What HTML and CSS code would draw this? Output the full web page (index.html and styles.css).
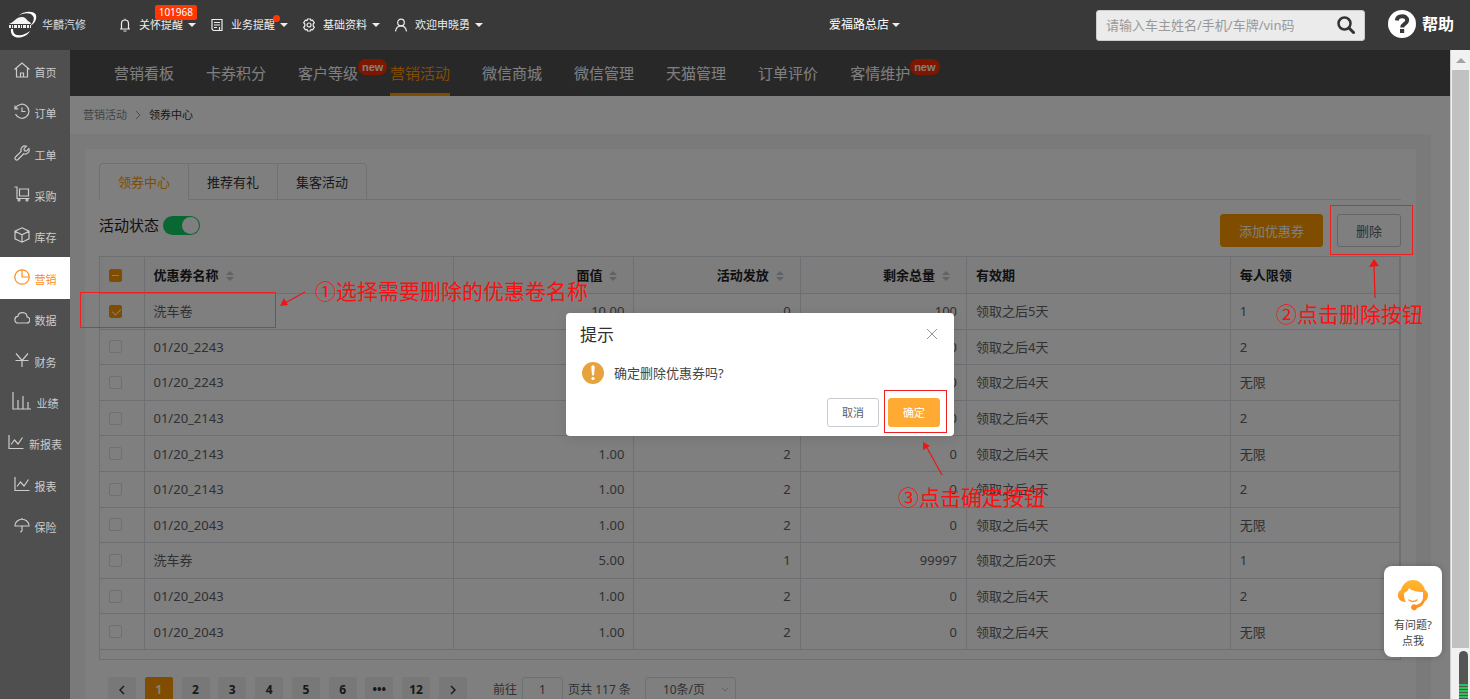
FILE: index.html
```html
<!DOCTYPE html>
<html lang="zh-CN">
<head>
<meta charset="utf-8">
<title>领券中心</title>
<link rel="stylesheet" href="styles.css">
</head>
<body>
<header class="topbar">
  <a class="brand" href="#">
    <svg class="brand-logo" viewBox="0 0 30 28" fill="none" aria-hidden="true">
      <path d="M10 5C15 0 26-1 28 4c1 5-2 9-6 11 3-3 5-7 3-10C22 1 15 2 10 5Z" fill="#fff"/>
      <path d="M1 13c2-1 4-2 6-4 2-2 4-3 7-3s4 2 6 4c2 1 3 2 3 3Z" fill="#f4f4f4"/>
      <path d="M1 15.500h22" stroke="#eee" stroke-width="3" stroke-dasharray="2 1 1 1 3 1"/>
      <path d="M3 18c-1 7 5 10 11 8 4-1 7-4 8-6-4 3-9 5-12 4-3 0-5-2-5-6Z" fill="#fff"/>
    </svg>
    <span>华麟汽修</span>
  </a>
  <nav class="menus">
    <button class="menu">
      <svg class="menu-icon" viewBox="0 0 14 14"><path d="M3.500 11V5.500a3.500 3.500 0 0 1 7 0V11M2 11h10M5.500 13h3M7 .8V2"/></svg>
      <span>关怀提醒</span><i class="caret"></i><b class="count">101968</b>
    </button>
    <button class="menu">
      <svg class="menu-icon" viewBox="0 0 14 14"><path d="M2 1.500h10v11H4a2 2 0 0 1-2-2ZM4 4.500h6M4 7h6M4 9.500h3M9.500 9v3.500"/></svg>
      <span>业务提醒</span><i class="caret"></i><b class="dot"></b>
    </button>
    <button class="menu">
      <svg class="menu-icon" viewBox="0 0 14 14"><path d="m5.500 1h3l.5 1.600 1.600-.4 1.700 2.500L11.200 6v2l1.100 1.300-1.700 2.500-1.600-.4-.5 1.600h-3L5 11.400l-1.600.4-1.700-2.500L2.800 8V6L1.700 4.700l1.700-2.500 1.600.4Z"/><circle cx="7" cy="7" r="2"/></svg>
      <span>基础资料</span><i class="caret"></i>
    </button>
    <button class="menu">
      <svg class="menu-icon" viewBox="0 0 14 14"><circle cx="7" cy="4.500" r="3.300"/><path d="M1.500 13.300C2 10 4 7.800 7 7.800s5 2.200 5.500 5.500"/></svg>
      <span>欢迎申晓勇</span><i class="caret"></i>
    </button>
  </nav>
  <button class="menu store"><span>爱福路总店</span><i class="caret"></i></button>
  <form class="search">
    <input type="text" aria-label="搜索" placeholder="请输入车主姓名/手机/车牌/vin码">
    <button type="button" aria-label="搜索">
      <svg width="18" height="18" viewBox="0 0 18 18" fill="none" stroke="#333"><circle cx="7.500" cy="7.500" r="6" stroke-width="2.500"/><path d="m12 12 4.500 4.500" stroke-width="3" stroke-linecap="round"/></svg>
    </button>
  </form>
  <a class="help" href="#">
    <svg width="28" height="28" viewBox="0 0 28 28"><circle cx="14" cy="14" r="14" fill="#fff"/><path d="M8.800 10.500C9.100 7.300 11.300 6.200 14 6.200c3 0 5.200 1.500 5.200 4.100 0 3.700-5 3.500-5 7.200" fill="none" stroke="#393939" stroke-width="4"/><rect x="12" y="19" width="4.200" height="4" fill="#393939"/></svg>
    <span>帮助</span>
  </a>
</header>

<div class="shell">
  <nav class="sidebar">
    <a href="#"><svg viewBox="0 0 16 16"><path d="M.5 7.500 8 1l7.500 6.500M2.500 6v9h11V6M6.500 15v-4h3v4"/></svg><span>首页</span></a>
    <a href="#"><svg viewBox="0 0 16 16"><path d="M1.500 5.500A7 7 0 1 1 1.500 11M1 2.500v3.300h3.300M8 4.500v4h3.500"/></svg><span>订单</span></a>
    <a href="#"><svg viewBox="0 0 16 16"><path d="M12.500 1.200 10 3.700l.4 2 2 .4 2.500-2.500c1.200 3.400-2 6.400-5.200 5.200L4 14.500c-1.700 1.500-4-.6-2.500-2.500L7.200 6.300C6 3 9 0 12.500 1.200Z"/></svg><span>工单</span></a>
    <a href="#"><svg viewBox="0 0 16 16"><path d="M.5 1H3v11.500h12.500M5.500 3h9v7h-9Z"/><circle cx="5" cy="14" r="1"/><circle cx="13" cy="14" r="1"/></svg><span>采购</span></a>
    <a href="#"><svg viewBox="0 0 16 16"><path d="m8 .8 7 3.400v7.600l-7 3.400-7-3.400V4.200ZM1 4.200l7 3.600 7-3.600M8 7.800v7.400"/></svg><span>库存</span></a>
    <a href="#" class="active"><svg viewBox="0 0 16 16"><circle cx="8" cy="8" r="7.200"/><path d="M8 .8V8h7.200"/></svg><span>营销</span></a>
    <a href="#"><svg viewBox="0 0 16 16"><path d="M4 13h8.500a3 3 0 0 0 .6-6C13 1.500 5 1 3.800 6.300 0 6.500-.2 12.800 4 13Z"/></svg><span>数据</span></a>
    <a href="#"><svg viewBox="0 0 16 16"><path d="m2 1.500 6 7 6-7M1.500 8.500h13M8 8.500V15"/></svg><span>财务</span></a>
    <a href="#"><svg class="wide" viewBox="0 0 20 18"><path d="M1 0v17h18M6 17V8M11 17V4M16 17v-7"/></svg><span>业绩</span></a>
    <a href="#"><svg viewBox="0 0 16 16"><path d="M1 1v13.500h14.500M3 10.500 6.500 6l3.500 4 4.500-6.500"/></svg><span>新报表</span></a>
    <a href="#"><svg viewBox="0 0 16 16"><path d="M1 1v13.500h14.500M3 10.500 6.500 6l3.500 4 4.500-6.500"/></svg><span>报表</span></a>
    <a href="#"><svg viewBox="0 0 16 16"><path d="M1 9C1 0 15 0 15 9ZM8 1v1.500M8 9v4.500q0 1.500-2 1.500"/></svg><span>保险</span></a>
  </nav>

  <div class="frame">
    <nav class="subnav">
      <a href="#">营销看板</a>
      <a href="#">卡券积分</a>
      <a href="#">客户等级<sup>new</sup></a>
      <a href="#" class="active">营销活动</a>
      <a href="#">微信商城</a>
      <a href="#">微信管理</a>
      <a href="#">天猫管理</a>
      <a href="#">订单评价</a>
      <a href="#">客情维护<sup>new</sup></a>
    </nav>
    <div class="crumbs">
      <a href="#">营销活动</a>
      <svg width="6" height="10" viewBox="0 0 6 10"><path d="m1 1 4 4-4 4" fill="none" stroke="#999"/></svg>
      <span>领券中心</span>
    </div>
    <main class="backdrop">
      <section class="panel">
        <div class="tabs">
          <button class="active">领券中心</button><button>推荐有礼</button><button>集客活动</button>
        </div>
        <div class="toolbar">
          <label class="status">活动状态<input class="switch" type="checkbox" role="switch" checked></label>
          <div class="actions">
            <button class="btn primary">添加优惠券</button>
            <button class="btn">删除</button>
          </div>
        </div>
        <div class="table-box">
          <table class="coupons">
            <colgroup><col class="c-check"><col class="c-name"><col class="c-value"><col class="c-count"><col class="c-count"><col class="c-valid"><col class="c-limit"></colgroup>
            <thead>
              <tr>
                <th><input class="tick mixed" type="checkbox" aria-label="全选"></th>
                <th>优惠券名称<i class="sort"></i></th>
                <th class="num">面值<i class="sort"></i></th>
                <th class="num">活动发放<i class="sort"></i></th>
                <th class="num">剩余总量<i class="sort"></i></th>
                <th>有效期</th>
                <th>每人限领</th>
              </tr>
            </thead>
            <tbody>
              <tr><td><input class="tick" type="checkbox" aria-label="选择" checked></td><td>洗车卷</td><td class="num">10.00</td><td class="num">0</td><td class="num">100</td><td>领取之后5天</td><td>1</td></tr>
              <tr><td><input class="tick" type="checkbox" aria-label="选择"></td><td>01/20_2243</td><td class="num">1.00</td><td class="num">2</td><td class="num">0</td><td>领取之后4天</td><td>2</td></tr>
              <tr><td><input class="tick" type="checkbox" aria-label="选择"></td><td>01/20_2243</td><td class="num">1.00</td><td class="num">2</td><td class="num">0</td><td>领取之后4天</td><td>无限</td></tr>
              <tr><td><input class="tick" type="checkbox" aria-label="选择"></td><td>01/20_2143</td><td class="num">1.00</td><td class="num">2</td><td class="num">0</td><td>领取之后4天</td><td>2</td></tr>
              <tr><td><input class="tick" type="checkbox" aria-label="选择"></td><td>01/20_2143</td><td class="num">1.00</td><td class="num">2</td><td class="num">0</td><td>领取之后4天</td><td>无限</td></tr>
              <tr><td><input class="tick" type="checkbox" aria-label="选择"></td><td>01/20_2143</td><td class="num">1.00</td><td class="num">2</td><td class="num">0</td><td>领取之后4天</td><td>2</td></tr>
              <tr><td><input class="tick" type="checkbox" aria-label="选择"></td><td>01/20_2043</td><td class="num">1.00</td><td class="num">2</td><td class="num">0</td><td>领取之后4天</td><td>无限</td></tr>
              <tr><td><input class="tick" type="checkbox" aria-label="选择"></td><td>洗车券</td><td class="num">5.00</td><td class="num">1</td><td class="num">99997</td><td>领取之后20天</td><td>1</td></tr>
              <tr><td><input class="tick" type="checkbox" aria-label="选择"></td><td>01/20_2043</td><td class="num">1.00</td><td class="num">2</td><td class="num">0</td><td>领取之后4天</td><td>2</td></tr>
              <tr><td><input class="tick" type="checkbox" aria-label="选择"></td><td>01/20_2043</td><td class="num">1.00</td><td class="num">2</td><td class="num">0</td><td>领取之后4天</td><td>无限</td></tr>
            </tbody>
          </table>
        </div>
        <div class="pagination">
          <div class="pages">
            <button aria-label="上一页"><svg width="8" height="10" viewBox="0 0 8 10"><path d="M6 1 2 5l4 4"/></svg></button>
            <button class="active">1</button><button>2</button><button>3</button><button>4</button><button>5</button><button>6</button><button>•••</button><button>12</button>
            <button aria-label="下一页"><svg width="8" height="10" viewBox="0 0 8 10"><path d="m2 1 4 4-4 4"/></svg></button>
          </div>
          <label class="jump">前往<input type="text" value="1">页</label><span>共 117 条</span>
          <div class="size">
            <select aria-label="每页条数"><option>10条/页</option></select>
            <svg width="8" height="6" viewBox="0 0 8 6"><path d="m1 1 3 3 3-3" fill="none" stroke="#c0c4cc"/></svg>
          </div>
        </div>
      </section>
    </main>

    <div class="mask">
      <div class="dialog" role="dialog" aria-labelledby="dialog-title">
        <div class="dialog-head">
          <h2 id="dialog-title">提示</h2>
          <button class="close" aria-label="关闭"><svg width="10" height="10" viewBox="0 0 10 10"><path d="m0 0 10 10M10 0 0 10" stroke="#909399"/></svg></button>
        </div>
        <div class="dialog-body">
          <svg width="22" height="22" viewBox="0 0 22 22"><circle cx="11" cy="11" r="11" fill="#e6a23c"/><path d="M9.300 5a1.700 1.700 0 0 1 3.400 0l-.6 7.500a1.100 1.100 0 0 1-2.200 0Z" fill="#fff"/><circle cx="11" cy="16.500" r="1.600" fill="#fff"/></svg>
          <p>确定删除优惠券吗?</p>
        </div>
        <div class="dialog-foot">
          <button class="btn small">取消</button>
          <button class="btn small primary">确定</button>
        </div>
      </div>
    </div>

    <a class="assistant" href="#">
      <svg width="32" height="32" viewBox="0 0 32 32">
        <defs><linearGradient id="hair" x1="0" y1="0" x2="0" y2="1"><stop offset="0" stop-color="#ffb92e"/><stop offset="1" stop-color="#ff8a1e"/></linearGradient></defs>
        <path d="M4 11C6 4 11 1 16 1s10 3 12 10c2 1 3 3 3 5 0 3-1 5-3 6-2 4-4 6-8 7a3 3 0 1 1-1-3c4-1 6-3 7-7V13c-5 0-11-1-14-4-1 3-3 4-5 5 0 4 0 6 2 9-3 0-6-1-7-3-2-3-1-8 2-9Z" fill="url(#hair)"/>
        <path d="M12 21q4 3 8 0" fill="none" stroke="#ff9a25" stroke-width="1.500" stroke-linecap="round"/>
      </svg>
      <span>有问题?</span><span>点我</span>
    </a>
  </div>

  <div class="scrollbar" aria-hidden="true">
    <svg class="arrow" width="10" height="5" viewBox="0 0 10 5"><path d="m0 5 5-5 5 5Z" fill="#a3a3a3"/></svg>
    <div class="thumb"></div>
    <div class="meter"></div>
  </div>
</div>

<div class="notes">
  <i class="ring ring-row"></i><i class="ring ring-delete"></i><i class="ring ring-confirm"></i>
  <span class="note note-row">①选择需要删除的优惠卷名称</span>
  <span class="note note-delete">②点击删除按钮</span>
  <span class="note note-confirm">③点击确定按钮</span>
  <svg class="pointer pointer-row" width="26" height="17" viewBox="0 0 26 17"><path d="M25 1 5 12" stroke="#f01414" stroke-width="1.200"/><path d="m0 15 4-8 4 7Z" fill="#f01414"/></svg>
  <svg class="pointer pointer-delete" width="12" height="40" viewBox="0 0 12 40"><path d="M5 5l1 34" stroke="#f01414" stroke-width="1.200"/><path d="m0 8 5-8 5 7Z" fill="#f01414"/></svg>
  <svg class="pointer pointer-confirm" width="22" height="36" viewBox="0 0 22 36"><path d="m4 5 16 29" stroke="#f01414" stroke-width="1.200"/><path d="M1 1 8 5l-7 4Z" fill="#f01414"/></svg>
</div>
</body>
</html>
```

FILE: styles.css
```css
* { box-sizing: border-box; }

body {
  margin: 0;
  height: 100vh;
  overflow: hidden;
  display: flex;
  flex-direction: column;
  font: 13px/20px "Noto Sans", "Noto Sans CJK SC", sans-serif;
  color: #606266;
}

a { color: inherit; text-decoration: none; }
button, input, select { font: inherit; color: inherit; margin: 0; }
button { border: 0; background: none; padding: 0; cursor: pointer; }

/* top bar */
.topbar {
  flex: none;
  height: 50px;
  display: flex;
  align-items: center;
  padding: 0 16px 0 8px;
  background: #393939;
  color: #fff;
}
.brand { display: flex; align-items: center; gap: 4px; width: 110px; font-size: 11px; color: #ddd; }
.brand-logo { width: 30px; height: 28px; }
.menus { display: flex; gap: 14px; }
.menu { position: relative; display: flex; align-items: center; gap: 7px; font-size: 11px; line-height: 16px; color: #eee; }
.menu-icon { width: 14px; height: 14px; fill: none; stroke: #eee; stroke-width: 1.2; }
.caret { width: 8px; margin-left: -2px; border: 4px solid transparent; border-top-color: #eee; border-bottom: 0; }
.count {
  position: absolute;
  top: -12px;
  right: -1px;
  padding: 0 4px;
  border-radius: 2px;
  background: #ff3700;
  color: #fff;
  font-weight: 400;
  font-size: 10px;
  line-height: 15px;
}
.dot { position: absolute; top: -2px; right: 8px; width: 7px; height: 7px; border-radius: 50%; background: #ff3700; }
.store { margin-left: auto; margin-right: 196px; font-size: 12px; gap: 5px; color: #fff; }
.search { display: flex; width: 269px; height: 31px; border: 1px solid #ccc; border-radius: 3px; background: #ebebeb; }
.search input { flex: 1; min-width: 0; border: 0; padding: 0 9px; background: none; outline: 0; }
.search input::placeholder { color: #999; opacity: 1; }
.search button { display: grid; place-items: center; width: 36px; }
.help { display: flex; align-items: center; gap: 6px; margin-left: 23px; margin-bottom: 3px; font-size: 16px; font-weight: 700; }

/* page shell */
.shell { flex: 1; min-height: 0; display: flex; }

.sidebar { flex: none; width: 70px; background: #4f4f4f; color: #ccc; font-size: 11px; }
.sidebar { display: grid; grid-auto-rows: 1fr; align-content: start; align-self: stretch; padding-bottom: 152px; }
.sidebar a { display: flex; align-items: center; justify-content: center; gap: 5px; padding-top: 2px; }
.sidebar svg { width: 16px; height: 16px; margin-bottom: 4px; fill: none; stroke: currentColor; stroke-width: 1.2; }
.sidebar svg.wide { width: 20px; height: 18px; }
.sidebar span { padding-top: 2px; }
.sidebar .active { background: #fff; color: #ff8c1a; }

.frame { position: relative; flex: 1; min-width: 0; overflow: hidden; background: #fff; }

.subnav { display: flex; gap: 32px; height: 46px; padding-left: 44px; background: #505050; color: #fff; font-size: 15px; }
.subnav a { position: relative; line-height: 46px; border-bottom: 3px solid transparent; height: 46px; white-space: nowrap; }
.subnav .active { color: #f90; border-color: #f90; }
.subnav sup {
  position: absolute;
  left: 60px;
  top: 9px;
  padding: 0 4px;
  border-radius: 8px;
  background: #ff2d00;
  font: 700 11px/16px "Liberation Sans", sans-serif;
}

.crumbs { display: flex; align-items: center; gap: 8px; height: 38px; padding-left: 13px; font-size: 11px; color: #333; }
.crumbs a { color: #888; }

.backdrop { margin-right: 19px; padding: 15px 15px 0; background: #f5f5f5; }
.panel { padding: 14px 15px 20px 14px; background: #fff; }

.tabs { display: flex; height: 37px; border-bottom: 1px solid #dfe2e8; }
.tabs button { width: 90px; margin-right: -1px; height: 37px; border: 1px solid #dfe2e8; color: #303133; }
.tabs button:first-child { border-top-left-radius: 4px; }
.tabs button:last-child { border-top-right-radius: 4px; }
.tabs .active { border-bottom-color: #fff; color: #f90; }

.toolbar { display: flex; justify-content: space-between; padding: 14px 0 9px; }
.status { display: flex; align-items: center; gap: 4px; height: 22px; font-size: 15px; color: #222; }
.switch { appearance: none; width: 37px; height: 19px; padding: 1px; border-radius: 10px; background: #13ce66; display: flex; justify-content: flex-end; }
.switch::before { content: ""; width: 17px; height: 17px; border-radius: 50%; background: #fff; }
.actions { display: flex; gap: 14px; }

.btn { height: 33px; padding: 0 18px; border: 1px solid #c8cad0; border-radius: 3px; background: #fff; color: #606266; }
.btn.primary { border-color: #f90; background: #f90; color: #fff; }
.btn.small { height: 29px; padding: 0 14px; font-size: 11px; }
.btn.small.primary { border-color: #ffab33; background: #ffab33; }

/* coupon table */
.table-box { padding-bottom: 9px; border: 1px solid #dcdfe6; border-top: 0; }
.coupons { width: 100%; height: 394px; border-collapse: collapse; table-layout: fixed; border: 1px solid #dcdfe6; border-width: 1px 0; }
.c-check { width: 44px; }
.c-name { width: 23.8%; }
.c-value { width: 13.9%; }
.c-count { width: 12.8%; }
.c-valid { width: 20.3%; }
.coupons th, .coupons td { padding: 0 9px; border: 1px solid #dcdfe6; text-align: left; white-space: nowrap; }
.coupons tr > :first-child { border-left: 0; }
.coupons thead tr { height: 37px; }
.coupons th { color: #222; font-weight: 700; background: #fafafa; }
.coupons .num { text-align: right; }
.coupons input { display: block; }

.tick { appearance: none; width: 13px; height: 13px; border: 1px solid #dcdfe6; border-radius: 2px; background: #fff; }
.tick:checked, .tick.mixed { border-color: #f90; background: #f90; }
.tick:checked::before { content: ""; display: block; width: 4px; height: 7px; margin: 1px 0 0 4px; border: solid #fff; border-width: 0 1px 1px 0; rotate: 45deg; }
.tick.mixed::before { content: ""; display: block; height: 1px; margin: 5px 2px; background: #fff; }

.sort { display: inline-flex; flex-direction: column; gap: 2px; width: 22px; align-items: center; vertical-align: middle; }
.sort::before, .sort::after { content: ""; border: 4px solid transparent; }
.sort::before { border-top: 0; border-bottom-color: #c0c4cc; }
.sort::after { border-bottom: 0; border-top-color: #c0c4cc; }

/* pagination */
.pagination { display: flex; align-items: center; padding: 17px 0 0 9px; font-size: 12px; }
.pages { display: flex; justify-content: space-between; width: 359px; margin-right: 26px; }
.pages button { display: grid; place-items: center; width: 28px; height: 25px; border-radius: 2px; background: #f0f0f2; color: #303133; font-weight: 700; }
.pages svg { fill: none; stroke: #303133; stroke-width: 1.4; }
.pages .active { background: #f90; color: #fff; }
.jump { display: flex; align-items: center; gap: 5px; }
.jump input { width: 41px; height: 25px; border: 1px solid #dcdfe6; border-radius: 3px; background: #fff; text-align: center; }
.size { position: relative; margin-left: 14px; }
.size select { appearance: none; width: 91px; height: 25px; padding: 0 17px; border: 1px solid #dcdfe6; border-radius: 3px; background: #fff; }
.size svg { position: absolute; right: 7px; top: 10px; }

/* confirm dialog */
.mask { position: absolute; inset: 0; display: grid; place-items: center; background: rgba(0, 0, 0, .5); }
.dialog { width: 388px; padding: 12px 14px 9px; border-radius: 4px; background: #fff; box-shadow: 0 2px 12px rgba(0, 0, 0, .1); }
.dialog-head { display: flex; justify-content: space-between; align-items: center; }
.dialog h2 { margin: 0; font-size: 17px; line-height: 20px; font-weight: 400; color: #303133; }
.close { display: grid; place-items: center; width: 16px; height: 20px; padding-bottom: 2px; }
.dialog-body { display: flex; align-items: center; gap: 10px; padding: 17px 2px 14px; color: #444; }
.dialog-body p { margin: 0; }
.dialog-foot { display: flex; justify-content: flex-end; gap: 9px; }

.assistant {
  position: absolute;
  right: 8px;
  bottom: 42px;
  display: flex;
  flex-direction: column;
  align-items: center;
  width: 58px;
  padding: 13px 0 8px;
  border-radius: 8px;
  background: #fff;
  box-shadow: 0 0 6px rgba(0, 0, 0, .2);
  color: #444;
  font-size: 11px;
  line-height: 16px;
}
.assistant svg { margin-bottom: 6px; }

/* scroll track */
.scrollbar { flex: none; width: 20px; display: flex; flex-direction: column; align-items: center; border-left: 1px solid #ccc; background: #f1f1f1; }
.arrow { margin: 8px 0 7px; }
.thumb { flex: 1; width: 17px; background: #c1c1c1; }
.meter {
  width: 9px;
  height: 48px;
  margin: 3px 0 0 5px;
  border-radius: 5px 5px 0 0;
  background: linear-gradient(#555 32px, transparent 32px), repeating-linear-gradient(#2fbf5b 0 2px, #4a5a4e 2px 3px);
}

/* step annotations drawn over the page */
.ring, .note, .pointer { position: absolute; }
.ring { border: 1px solid #f02020; }
.ring-row { left: 80px; top: 292px; width: 196px; height: 36px; }
.ring-delete { right: 57px; top: 205px; width: 83px; height: 50px; }
.ring-confirm { left: 884px; top: 390px; width: 63px; height: 43px; }
.note { color: #fa1010; font-size: 21px; line-height: 30px; white-space: nowrap; }
.note-row { left: 315px; top: 276px; }
.note-delete { right: 47px; top: 299px; }
.note-confirm { left: 898px; top: 482px; }
.pointer { fill: none; }
.pointer-row { left: 280px; top: 291px; }
.pointer-delete { right: 89px; top: 259px; }
.pointer-confirm { left: 922px; top: 441px; }
```
